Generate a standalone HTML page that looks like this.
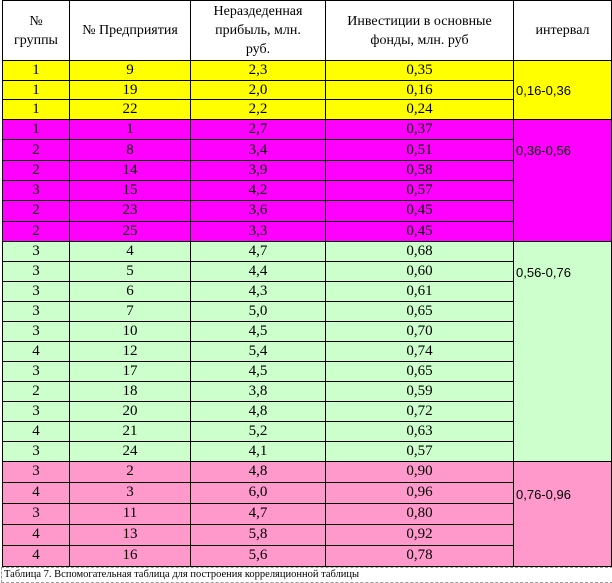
<!DOCTYPE html>
<html><head><meta charset="utf-8"><style>
body{margin:0;width:612px;height:583px;background:#fff;position:relative;overflow:hidden;font-family:"Liberation Serif","DejaVu Serif",serif;}
table{position:absolute;left:2px;top:0;border-collapse:collapse;table-layout:fixed;width:609px;}
td{border:1px solid #000;text-align:center;font-size:15px;padding:0;line-height:17px;}
th{border:1px solid #000;font-weight:normal;font-size:14px;height:59px;line-height:19px;background:#fff;padding:0;}
.y td{background:#ffff00}.m td{background:#ff00ff}.g td{background:#ccffcc}.p td{background:#ff99cc}
tr.y{height:19.7px}tr.m{height:20.3px}tr.g{height:20px}tr.p{height:21px}
td.iv{text-align:left;font-family:"Liberation Sans",sans-serif;font-size:13px;padding-left:2px;vertical-align:top;}
.cap{position:absolute;left:1px;top:567px;width:608px;height:14px;border:1px dashed #999;font-size:10.5px;line-height:14px;padding-left:2px;}
</style></head><body>
<table>
<colgroup><col style="width:67px"><col style="width:121px"><col style="width:135px"><col style="width:188px"><col style="width:98px"></colgroup>
<tr><th>№<br>группы</th><th>№ Предприятия</th><th>Нераздеденная<br>прибыль, млн.<br>руб.</th><th>Инвестиции в основные<br>фонды, млн. руб</th><th>интервал</th></tr>
<tr class="y"><td>1</td><td>9</td><td>2,3</td><td>0,35</td><td class="iv" rowspan="3" style="vertical-align:middle">0,16-0,36</td></tr>
<tr class="y"><td>1</td><td>19</td><td>2,0</td><td>0,16</td></tr>
<tr class="y"><td>1</td><td>22</td><td>2,2</td><td>0,24</td></tr>
<tr class="m"><td>1</td><td>1</td><td>2,7</td><td>0,37</td><td class="iv" rowspan="6" style="padding-top:22px">0,36-0,56</td></tr>
<tr class="m"><td>2</td><td>8</td><td>3,4</td><td>0,51</td></tr>
<tr class="m"><td>2</td><td>14</td><td>3,9</td><td>0,58</td></tr>
<tr class="m"><td>3</td><td>15</td><td>4,2</td><td>0,57</td></tr>
<tr class="m"><td>2</td><td>23</td><td>3,6</td><td>0,45</td></tr>
<tr class="m"><td>2</td><td>25</td><td>3,3</td><td>0,45</td></tr>
<tr class="g"><td>3</td><td>4</td><td>4,7</td><td>0,68</td><td class="iv" rowspan="11" style="padding-top:22px">0,56-0,76</td></tr>
<tr class="g"><td>3</td><td>5</td><td>4,4</td><td>0,60</td></tr>
<tr class="g"><td>3</td><td>6</td><td>4,3</td><td>0,61</td></tr>
<tr class="g"><td>3</td><td>7</td><td>5,0</td><td>0,65</td></tr>
<tr class="g"><td>3</td><td>10</td><td>4,5</td><td>0,70</td></tr>
<tr class="g"><td>4</td><td>12</td><td>5,4</td><td>0,74</td></tr>
<tr class="g"><td>3</td><td>17</td><td>4,5</td><td>0,65</td></tr>
<tr class="g"><td>2</td><td>18</td><td>3,8</td><td>0,59</td></tr>
<tr class="g"><td>3</td><td>20</td><td>4,8</td><td>0,72</td></tr>
<tr class="g"><td>4</td><td>21</td><td>5,2</td><td>0,63</td></tr>
<tr class="g"><td>3</td><td>24</td><td>4,1</td><td>0,57</td></tr>
<tr class="p"><td>3</td><td>2</td><td>4,8</td><td>0,90</td><td class="iv" rowspan="5" style="padding-top:24px">0,76-0,96</td></tr>
<tr class="p"><td>4</td><td>3</td><td>6,0</td><td>0,96</td></tr>
<tr class="p"><td>3</td><td>11</td><td>4,7</td><td>0,80</td></tr>
<tr class="p"><td>4</td><td>13</td><td>5,8</td><td>0,92</td></tr>
<tr class="p"><td>4</td><td>16</td><td>5,6</td><td>0,78</td></tr>
</table>
<div class="cap">Таблица 7. Вспомогательная таблица для построения корреляционной таблицы</div>
</body></html>
